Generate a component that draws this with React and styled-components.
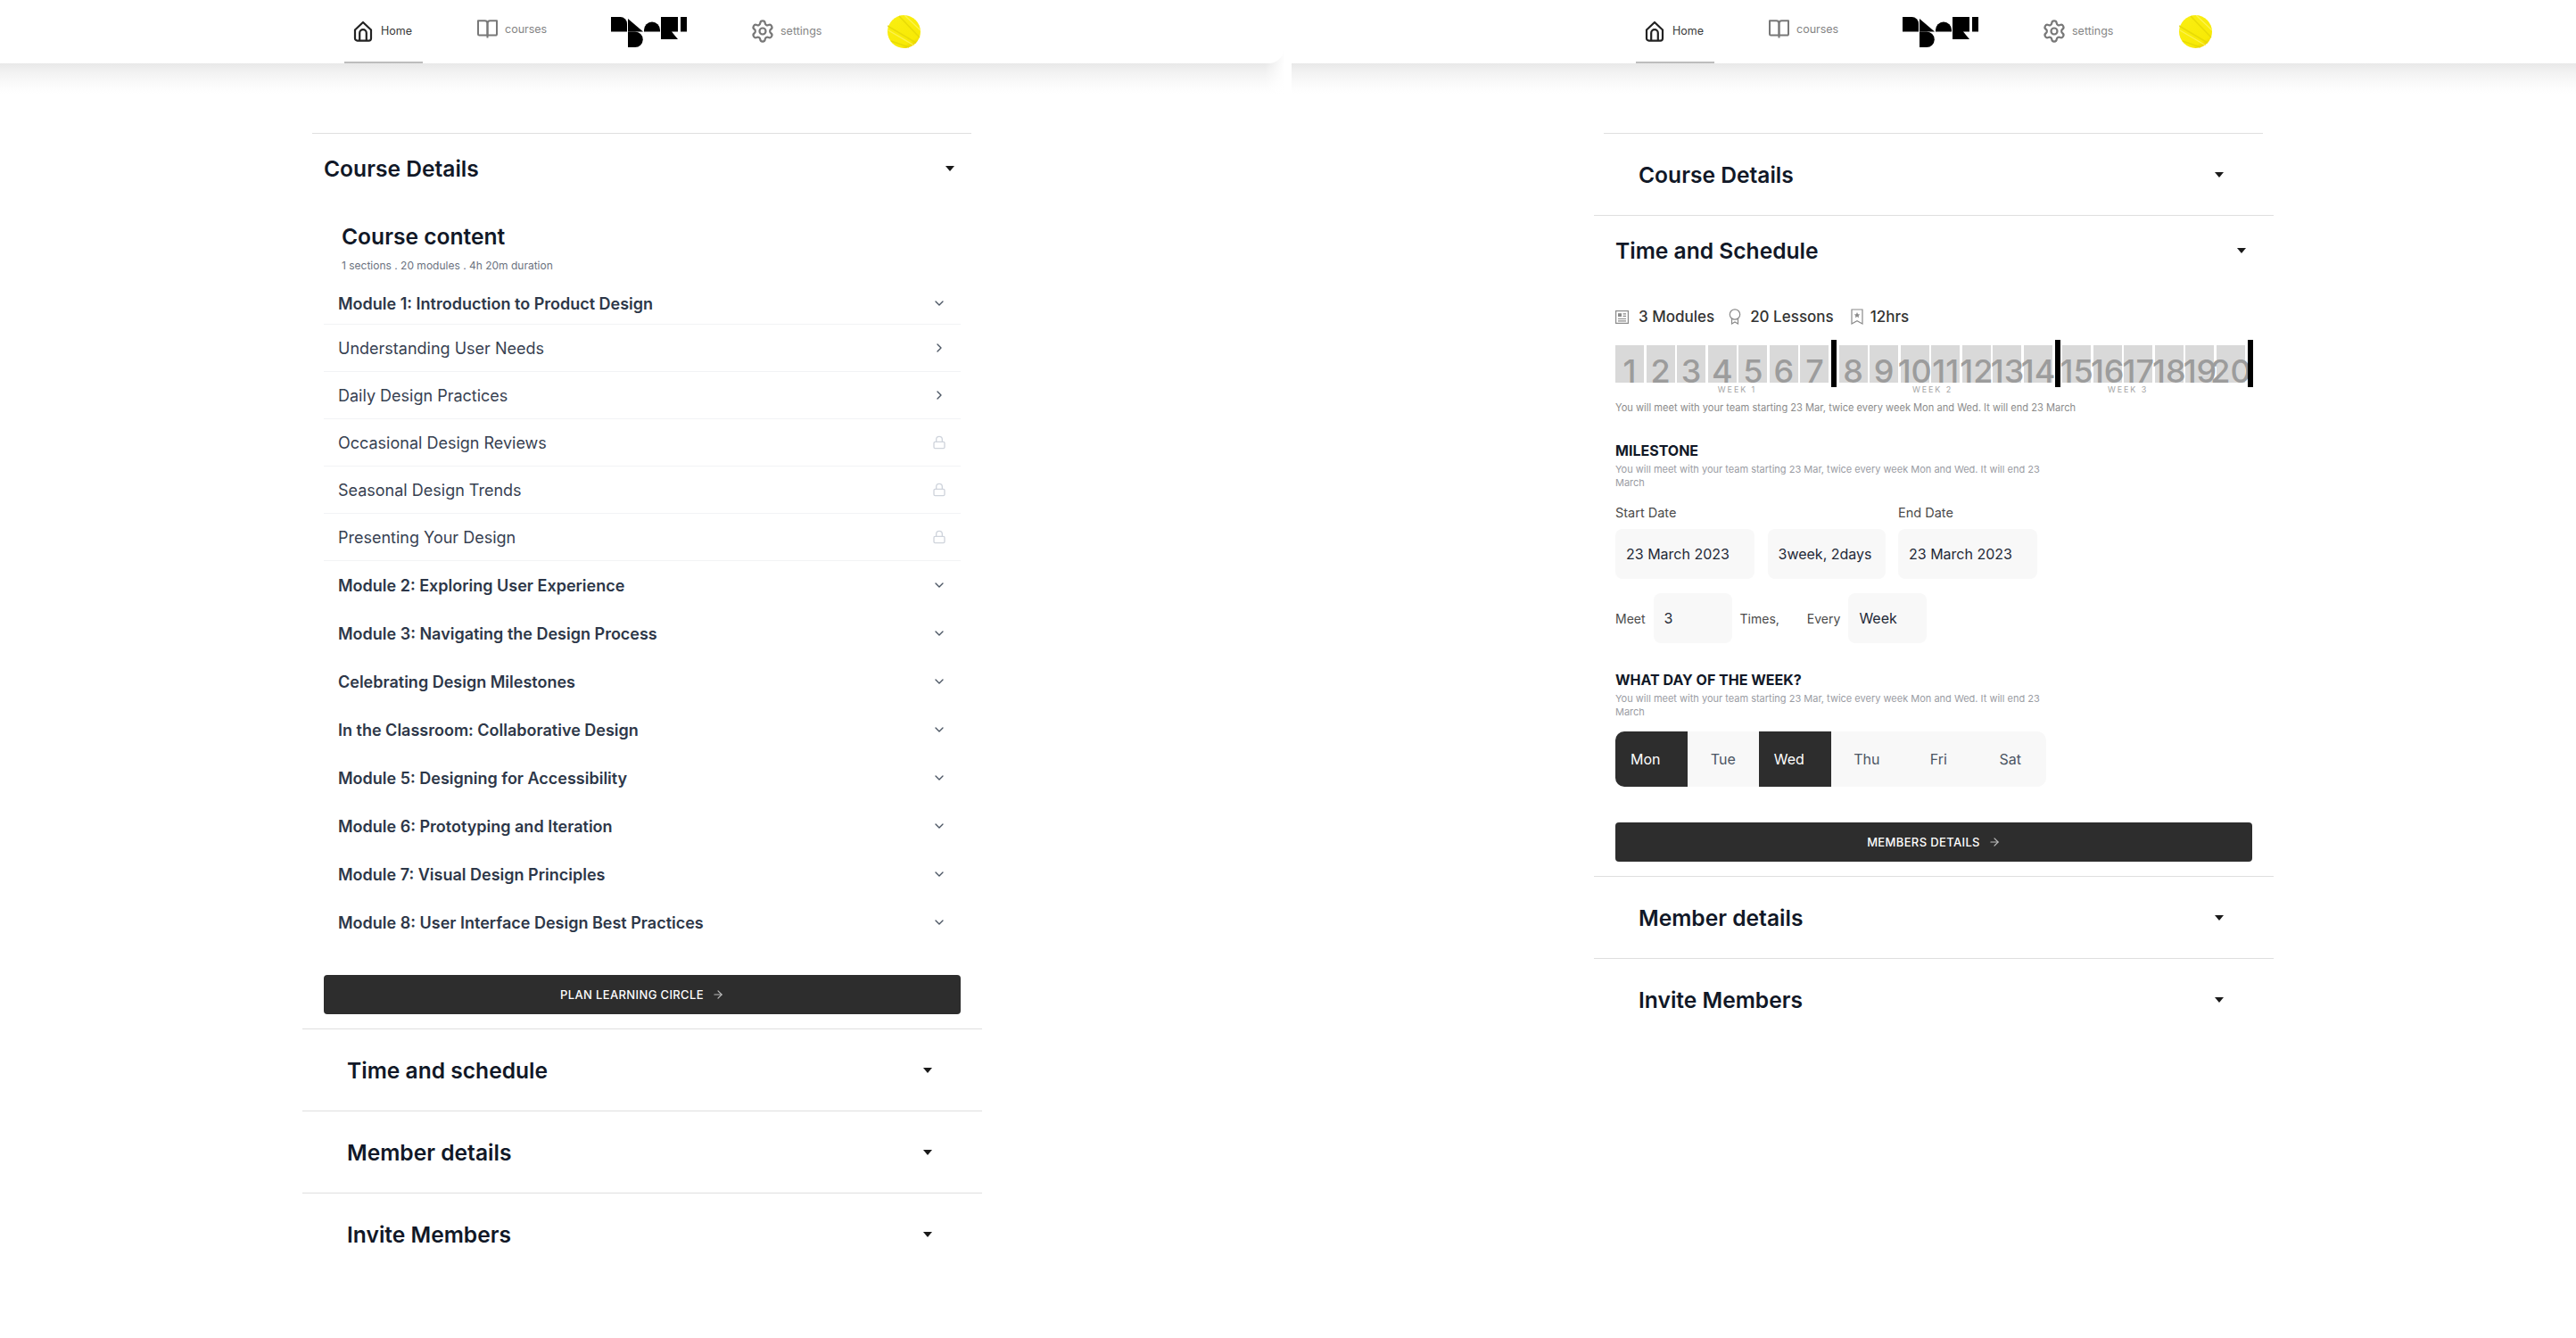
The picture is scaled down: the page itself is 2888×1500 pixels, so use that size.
import React from "react";
import styled, { createGlobalStyle } from "styled-components";
import { ChevronDown, ChevronRight, Lock, ArrowRight, Settings } from "lucide-react";

const Global = createGlobalStyle`
  html, body { margin: 0; padding: 0; background: #fff; }
  body { font-family: Inter, "Noto Sans", sans-serif; }
  * { box-sizing: border-box; }
`;

const Page = styled.div`
  width: 2888px;
  height: 1500px;
  display: flex;
  gap: 8px;
  overflow: hidden;
  background: #fff;
`;
const Frame = styled.div`
  width: 1440px;
  height: 1500px;
  display: flex;
  flex-direction: column;
  overflow: hidden;
`;
const Header = styled.header`
  position: relative;
  z-index: 1;
  height: 71px;
  flex: none;
  background: #fff;
  padding-left: 386px;
  display: grid;
  grid-template-columns: 139px 160px 158px 152px 37px;
  align-items: center;
  border-bottom-right-radius: ${(p) => (p.$rounded ? "18px" : "0")};
`;
const Fade = styled.div`
  height: 50px;
  flex: none;
  margin-top: -16px;
  background: ${(p) => (p.$fadeRight ? "linear-gradient(to left, #fff 0, rgba(255,255,255,0) 22px)," : "")}
    linear-gradient(#e8e8e8 0, #e8e8e8 16px, #f2f2f2 26px, #fbfbfb 40px, #fff 50px);
`;
const NavTab = styled.a`
  height: 71px;
  width: ${(p) => (p.$active ? "88px" : "auto")};
  padding: 0 0 ${(p) => p.$lift || 0}px ${(p) => (p.$flush ? 0 : 10)}px;
  display: flex;
  align-items: center;
  gap: ${(p) => p.$gap || 8}px;
  font-size: 12.5px;
  color: ${(p) => (p.$active ? "#3a3a3a" : "#858585")};
  border-bottom: ${(p) => (p.$active ? "2px solid #bdbdbd" : "2px solid transparent")};
`;
const GearSlot = styled.span`
  display: flex;
  margin-left: -2px;
`;
const LogoSlot = styled.div`
  height: 71px;
  display: flex;
  align-items: center;
`;
const Main = styled.main`
  width: 762px;
  margin-left: 339px;
  padding-top: 44px;
  display: flex;
  flex-direction: column;
`;
const TopLine = styled.div`
  height: 1px;
  margin: 0 12px 0 11px;
  background: #dfdfdf;
`;
const SectionHead = styled.div`
  height: ${(p) => (p.$open ? 76 : 91)}px;
  padding: ${(p) => (p.$open ? "1px 31px 0 24px" : "0 56px 0 50px")};
  display: flex;
  align-items: center;
  justify-content: space-between;
`;
const SectionTitle = styled.h2`
  margin: 0;
  font-size: 24.6px;
  line-height: 30px;
  font-weight: 600;
  color: #111827;
`;
const Caret = styled.span`
  width: 0;
  height: 0;
  border-left: 5px solid transparent;
  border-right: 5px solid transparent;
  border-top: 6px solid #1a1a1a;
`;
const Rule = styled.div`
  height: 1px;
  background: #dfdfdf;
`;
const Body = styled.div`
  padding: 0 24px;
  display: flex;
  flex-direction: column;
`;
const ContentIntro = styled.div`
  margin: 24px 0 0 20px;
  display: flex;
  flex-direction: column;
  gap: 10px;
`;
const ContentTitle = styled.h3`
  margin: 0;
  font-size: 24.6px;
  line-height: 30px;
  font-weight: 600;
  color: #111827;
`;
const ContentMeta = styled.div`
  font-size: 12px;
  line-height: 16px;
  color: #6b7280;
`;
const Rows = styled.div`
  margin-top: 5px;
  display: flex;
  flex-direction: column;
`;
const Row = styled.div`
  height: ${(p) => (p.$ruled ? 53 : 54)}px;
  padding: ${(p) => (p.$first ? "6px" : "0")} 16px 0;
  display: flex;
  align-items: center;
  justify-content: space-between;
  font-size: 18px;
  font-weight: ${(p) => (p.$strong ? 600 : 400)};
  color: ${(p) => (p.$strong ? "#2d3748" : "#374151")};
  border-bottom: ${(p) => (p.$ruled ? "1px solid #f2f3f5" : "none")};
`;
const PrimaryButton = styled.button`
  height: 44px;
  width: 100%;
  margin-top: ${(p) => p.$top}px;
  margin-bottom: 16px;
  border: none;
  border-radius: 4px;
  background: #2d2d2d;
  color: #fff;
  font: 500 13px Inter, sans-serif;
  letter-spacing: 0.36px;
  display: flex;
  align-items: center;
  justify-content: center;
  gap: 9px;
  svg { color: #bdbdbd; }
`;
const Stats = styled.div`
  margin-top: 25px;
  height: 24px;
  display: flex;
  align-items: center;
`;
const Stat = styled.div`
  display: flex;
  align-items: center;
  gap: ${(p) => p.$gap || 10}px;
  margin-right: ${(p) => p.$after || 0}px;
  font-size: 17px;
  font-weight: 500;
  color: #333;
`;
const Strip = styled.div`
  margin-top: 14px;
  height: 53px;
  display: flex;
  align-items: center;
`;
const WeekCells = styled.div`
  display: flex;
  gap: 2.58px;
`;
const DayCell = styled.div`
  width: 32px;
  height: 42px;
  background: #d9d9d9;
  display: flex;
  align-items: flex-end;
  justify-content: center;
`;
const DayNum = styled.span`
  font-size: 36px;
  font-weight: 500;
  line-height: 36px;
  margin-bottom: -5px;
  color: #9c9c9c;
  white-space: nowrap;
`;
const WeekBar = styled.div`
  width: 5.5px;
  height: 53px;
  margin: 0 ${(p) => p.$after}px 0 3px;
  background: #000;
  flex: none;
`;
const WeekLabels = styled.div`
  margin: -2px 0 0 27px;
  display: grid;
  grid-template-columns: repeat(3, 219px);
`;
const WeekLabel = styled.span`
  text-align: center;
  font-size: 9px;
  line-height: 10px;
  letter-spacing: 1.9px;
  color: #a5a5a5;
`;
const Note = styled.p`
  margin: 8px 0 0;
  font-size: 11.1px;
  line-height: 15px;
  color: #8b8b8b;
`;
const SubHead = styled.h4`
  margin: ${(p) => p.$top}px 0 0;
  font-size: 16px;
  line-height: 20px;
  font-weight: 700;
  color: #111827;
`;
const SubDesc = styled.p`
  width: 480px;
  margin: 3.5px 0 0;
  font-size: 11px;
  line-height: 15px;
  color: #9a9ca3;
`;
const DateRow = styled.div`
  margin-top: 17.5px;
  display: flex;
  align-items: flex-end;
  gap: 14.5px;
`;
const Field = styled.div`
  display: flex;
  flex-direction: column;
  gap: 9px;
`;
const FieldLabel = styled.label`
  font-size: 14.5px;
  line-height: 18px;
  color: #4b4b4b;
`;
const ValueBox = styled.div`
  width: ${(p) => p.$w}px;
  height: 56px;
  padding: 0 12px;
  border-radius: 8px;
  background: #f8f8f8;
  display: flex;
  align-items: center;
  font-size: 16px;
  color: #1f2937;
  white-space: nowrap;
`;
const MeetRow = styled.div`
  margin-top: 16px;
  display: flex;
  align-items: center;
  gap: 9px;
`;
const MeetWord = styled.span`
  font-size: 14px;
  color: #4b4b4b;
  margin-left: ${(p) => p.$left || 0}px;
`;
const DayGroup = styled.div`
  margin-top: 14.5px;
  width: 483px;
  height: 62px;
  border-radius: 10px;
  overflow: hidden;
  background: #f8f8f8;
  display: grid;
  grid-template-columns: repeat(6, 1fr);
`;
const DayButton = styled.div`
  display: flex;
  align-items: center;
  justify-content: center;
  padding-right: ${(p) => (p.$on ? 13 : 0)}px;
  font-size: 16px;
  background: ${(p) => (p.$on ? "#2d2d2d" : "transparent")};
  color: ${(p) => (p.$on ? "#fff" : "#4b5563")};
`;

const HomeIcon = () => (
  <svg width="22" height="24" viewBox="0 0 22 24" fill="none" stroke="#222" strokeWidth="2.2" strokeLinejoin="round">
    <path d="M2 10.5 11 2l9 8.5V20a2.6 2.6 0 0 1-2.6 2.6H4.6A2.6 2.6 0 0 1 2 20z" />
    <path d="M7.2 22.6V14a3.8 3.8 0 0 1 7.6 0v8.6" />
  </svg>
);
const BookIcon = () => (
  <svg width="23" height="21" viewBox="0 0 23 21" fill="none" stroke="#787878" strokeWidth="2" strokeLinejoin="round">
    <path d="M1 1.2h7.500c1.800 0 3 1 3 3V17.600H2.400A1.400 1.400 0 0 1 1 16.200z" />
    <path d="M22 1.200h-7.500c-1.800 0-3 1-3 3V17.600h9.100a1.400 1.400 0 0 0 1.400-1.400z" />
    <path d="M11.500 17.600V20.500" />
  </svg>
);
const Logo = () => (
  <svg width="85" height="34" viewBox="0 0 85 34" fill="#000">
    <path d="M0 0h10.500A7.500 7.500 0 0 1 18 7.500V16.500H0z" />
    <path d="M19 2 36 16.500H19z" />
    <path d="M19 16.500h8a8.750 8.750 0 0 1 0 17.500h-8z" />
    <path d="M37 16.500V14.500a9 9 0 0 1 18 0v2z" />
    <path d="M56 0h19v16.500h-7l7 8.500H56z" />
    <path d="M78 0h7v16.500h-7z" />
  </svg>
);
const Avatar = () => (
  <svg width="37" height="37" viewBox="0 0 37 37">
    <defs>
      <linearGradient id="avatar-fill" x1="0.2" y1="0" x2="0.8" y2="1">
        <stop offset="0" stopColor="#f9ee12" />
        <stop offset="0.8" stopColor="#f8ea05" />
        <stop offset="1" stopColor="#e9c900" />
      </linearGradient>
    </defs>
    <circle cx="18.500" cy="18.500" r="18.500" fill="url(#avatar-fill)" />
    <path d="M13 1 36 25M0 12 32 31M4 29 24 36" stroke="#e3d706" strokeWidth="1.600" fill="none" opacity="0.8" />
    <path d="M19 0 37 17M1 17 30 34" stroke="#fff56a" strokeWidth="1.400" fill="none" opacity="0.7" />
  </svg>
);
const ModulesIcon = () => (
  <svg width="15" height="15" viewBox="0 0 15 15" fill="none" stroke="#8a8a8a" strokeWidth="1.200">
    <rect x="0.600" y="0.600" width="13.800" height="13.800" />
    <rect x="3" y="3.200" width="4" height="3.800" fill="#8a8a8a" stroke="none" />
    <path d="M8.500 3.800h3.500M8.500 6.300h3.500M3 9.500h9M3 11.800h9" />
  </svg>
);
const AwardIcon = () => (
  <svg width="14" height="18" viewBox="0 0 14 18" fill="none" stroke="#8a8a8a" strokeWidth="1.200">
    <circle cx="7" cy="6.500" r="5.700" />
    <path d="M3.500 11v6L7 15l3.500 2v-6" />
  </svg>
);
const SavedIcon = () => (
  <svg width="14" height="18" viewBox="0 0 14 18" fill="none" stroke="#8a8a8a" strokeWidth="1.200">
    <path d="M1 1h12v16l-6-3.200L1 17z" />
    <path d="m7 4 1 2.200 2.300.2-1.700 1.600.5 2.300L7 9.100l-2.100 1.200.5-2.300-1.700-1.600L6 6.200z" fill="#8a8a8a" stroke="none" />
  </svg>
);

const TopBar = ({ rounded }) => (
  <>
    <Header $rounded={rounded}>
      <NavTab $active $gap={9}><HomeIcon />Home</NavTab>
      <NavTab $lift={5}><BookIcon />courses</NavTab>
      <LogoSlot><Logo /></LogoSlot>
      <NavTab $flush $gap={6}><GearSlot><Settings size={28} color="#787878" strokeWidth={1.900} /></GearSlot>settings</NavTab>
      <Avatar />
    </Header>
    <Fade $fadeRight={rounded} />
  </>
);

const Section = ({ title }) => (
  <>
    <SectionHead><SectionTitle>{title}</SectionTitle><Caret /></SectionHead>
    <Rule />
  </>
);

const lessons = [
  ["Understanding User Needs", "open"],
  ["Daily Design Practices", "open"],
  ["Occasional Design Reviews", "lock"],
  ["Seasonal Design Trends", "lock"],
  ["Presenting Your Design", "lock"],
];
const modules = [
  "Module 2: Exploring User Experience",
  "Module 3: Navigating the Design Process",
  "Celebrating Design Milestones",
  "In the Classroom: Collaborative Design",
  "Module 5: Designing for Accessibility",
  "Module 6: Prototyping and Iteration",
  "Module 7: Visual Design Principles",
  "Module 8: User Interface Design Best Practices",
];
const range = (a, b) => Array.from({ length: b - a + 1 }, (_, i) => a + i);
const Cells = ({ from, to }) => (
  <WeekCells>
    {range(from, to).map((n) => (
      <DayCell key={n}><DayNum>{n}</DayNum></DayCell>
    ))}
  </WeekCells>
);
const milestoneText = "You will meet with your team starting 23 Mar, twice every week Mon and Wed. It will end 23 March";

const CourseFrame = () => (
  <Frame>
    <TopBar rounded />
    <Main>
      <TopLine />
      <SectionHead $open><SectionTitle>Course Details</SectionTitle><Caret /></SectionHead>
      <Body>
        <ContentIntro>
          <ContentTitle>Course content</ContentTitle>
          <ContentMeta>1 sections . 20 modules . 4h 20m duration</ContentMeta>
        </ContentIntro>
        <Rows>
          <Row $strong $ruled $first>Module 1: Introduction to Product Design<ChevronDown size={16} color="#4b5563" /></Row>
          {lessons.map(([name, state]) => (
            <Row $ruled key={name}>
              {name}
              {state === "open" ? <ChevronRight size={16} color="#4b5563" /> : <Lock size={16} color="#cfd4dc" />}
            </Row>
          ))}
          {modules.map((name) => (
            <Row $strong key={name}>{name}<ChevronDown size={16} color="#4b5563" /></Row>
          ))}
        </Rows>
        <PrimaryButton $top={32}>PLAN LEARNING CIRCLE <ArrowRight size={14} /></PrimaryButton>
      </Body>
      <Rule />
      <Section title="Time and schedule" />
      <Section title="Member details" />
      <SectionHead><SectionTitle>Invite Members</SectionTitle><Caret /></SectionHead>
    </Main>
  </Frame>
);

const ScheduleFrame = () => (
  <Frame>
    <TopBar />
    <Main>
      <TopLine />
      <Section title="Course Details" />
      <SectionHead $open><SectionTitle>Time and Schedule</SectionTitle><Caret /></SectionHead>
      <Body>
        <Stats>
          <Stat $gap={11} $after={16}><ModulesIcon />3 Modules</Stat>
          <Stat $after={19}><AwardIcon />20 Lessons</Stat>
          <Stat $gap={8}><SavedIcon />12hrs</Stat>
        </Stats>
        <Strip>
          <Cells from={1} to={7} />
          <WeekBar $after={2.6} />
          <Cells from={8} to={14} />
          <WeekBar $after={2.6} />
          <Cells from={15} to={20} />
          <WeekBar $after={0} />
        </Strip>
        <WeekLabels>
          <WeekLabel>WEEK 1</WeekLabel>
          <WeekLabel>WEEK 2</WeekLabel>
          <WeekLabel>WEEK 3</WeekLabel>
        </WeekLabels>
        <Note>{milestoneText}</Note>
        <SubHead $top={30}>MILESTONE</SubHead>
        <SubDesc>{milestoneText}</SubDesc>
        <DateRow>
          <Field><FieldLabel>Start Date</FieldLabel><ValueBox $w={156}>23 March 2023</ValueBox></Field>
          <ValueBox $w={132}>3week, 2days</ValueBox>
          <Field><FieldLabel>End Date</FieldLabel><ValueBox $w={156}>23 March 2023</ValueBox></Field>
        </DateRow>
        <MeetRow>
          <MeetWord>Meet</MeetWord>
          <ValueBox $w={88}>3</ValueBox>
          <MeetWord>Times,</MeetWord>
          <MeetWord $left={22}>Every</MeetWord>
          <ValueBox $w={88}>Week</ValueBox>
        </MeetRow>
        <SubHead $top={31}>WHAT DAY OF THE WEEK?</SubHead>
        <SubDesc>{milestoneText}</SubDesc>
        <DayGroup>
          {["Mon", "Tue", "Wed", "Thu", "Fri", "Sat"].map((d) => (
            <DayButton key={d} $on={d === "Mon" || d === "Wed"}>{d}</DayButton>
          ))}
        </DayGroup>
        <PrimaryButton $top={40}>MEMBERS DETAILS <ArrowRight size={14} /></PrimaryButton>
      </Body>
      <Rule />
      <Section title="Member details" />
      <SectionHead><SectionTitle>Invite Members</SectionTitle><Caret /></SectionHead>
    </Main>
  </Frame>
);

export default function App() {
  return (
    <>
      <Global />
      <Page>
        <CourseFrame />
        <ScheduleFrame />
      </Page>
    </>
  );
}
